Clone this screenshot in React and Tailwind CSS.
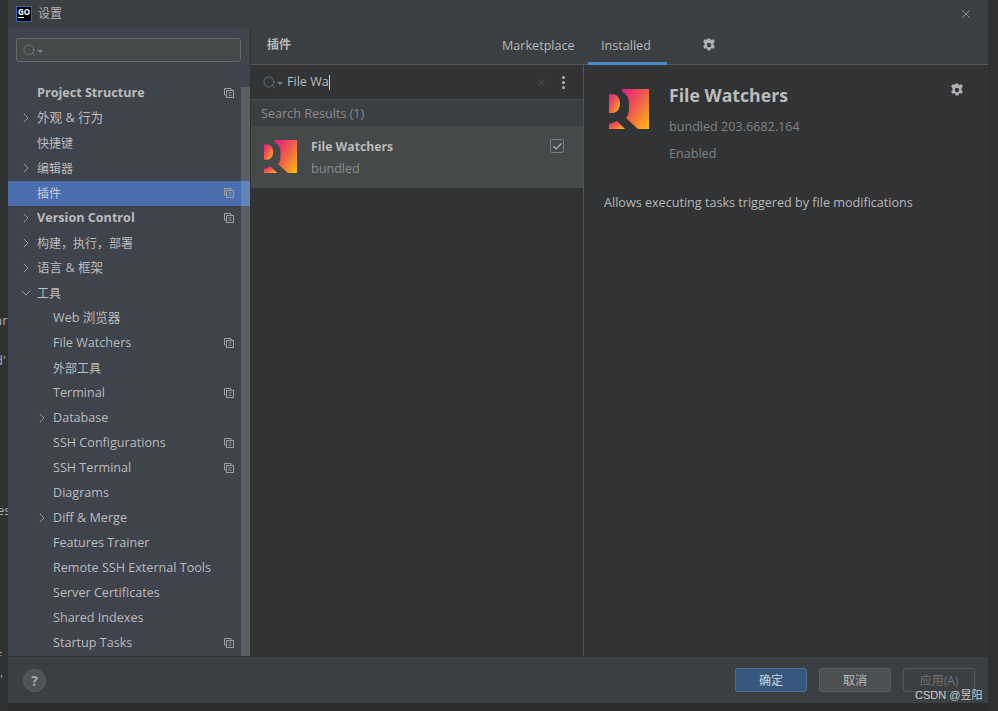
import React from 'react';
import { ChevronRight, ChevronDown, X, Search, Check } from 'lucide-react';

const TREE = [
  { label: 'Project Structure', bold: true, copy: true },
  { label: '外观 & 行为', arrow: 'right' },
  { label: '快捷键', cjk: true },
  { label: '编辑器', arrow: 'right', cjk: true },
  { label: '插件', copy: true, active: true, cjk: true },
  { label: 'Version Control', bold: true, arrow: 'right', copy: true },
  { label: '构建，执行，部署', arrow: 'right', cjk: true },
  { label: '语言 & 框架', arrow: 'right' },
  { label: '工具', arrow: 'down', cjk: true },
  { label: 'Web 浏览器', sub: true },
  { label: 'File Watchers', sub: true, copy: true },
  { label: '外部工具', sub: true, cjk: true },
  { label: 'Terminal', sub: true, copy: true },
  { label: 'Database', sub: true, arrow: 'right' },
  { label: 'SSH Configurations', sub: true, copy: true },
  { label: 'SSH Terminal', sub: true, copy: true },
  { label: 'Diagrams', sub: true },
  { label: 'Diff & Merge', sub: true, arrow: 'right' },
  { label: 'Features Trainer', sub: true },
  { label: 'Remote SSH External Tools', sub: true },
  { label: 'Server Certificates', sub: true },
  { label: 'Shared Indexes', sub: true },
  { label: 'Startup Tasks', sub: true, copy: true },
];

function Gear({ className }) {
  return (
    <svg viewBox="0 0 14 14" className={className} fill="currentColor">
      <path fillRule="evenodd" d="M5.6.6h2.8l.4 1.8 1-.6 1.7-.6 1.4 2.4-1.4 1.3v2.2l1.4 1.3-1.4 2.4-1.7-.6-1 .6-.4 1.8H5.6l-.4-1.8-1-.6-1.7.6L1.1 8.4l1.4-1.3V4.9L1.1 3.6l1.4-2.4 1.7.6 1-.6zM7 4.8a2.2 2.2 0 1 0 0 4.4 2.2 2.2 0 0 0 0-4.4z" />
    </svg>
  );
}

function CopyMark() {
  return (
    <svg viewBox="0 0 10 10" className="w-[10px] h-[10px] mr-[16px] mb-[2px] flex-none text-[#9a9ea2]" fill="none" stroke="currentColor" strokeWidth="1">
      <path d="M7 2.5V.5H.5V7h2" />
      <rect x="2.5" y="2.5" width="7" height="7" />
      <path d="M4.5 4.8h3M4.5 7.2h3" />
    </svg>
  );
}

function PluginLogo({ id, className }) {
  return (
    <svg viewBox="0 0 40 40" className={className}>
      <defs>
        <linearGradient id={id} x1="0" y1="0" x2="1" y2="1">
          <stop offset="0" stopColor="#dd1a86" />
          <stop offset="0.5" stopColor="#f1604a" />
          <stop offset="1" stopColor="#fdc00f" />
        </linearGradient>
      </defs>
      <g fill={`url(#${id})`}>
        <path d="M13 0H40V40H29L17 29C20 27 20 21 20 15C20 9 18 5 13 3Z" />
        <path d="M0 5H3C8 5 11 9 11 14.500C11 20 8 24 3 24H0Z" />
        <path d="M0 40V35L8 32L16 40Z" />
      </g>
    </svg>
  );
}

function SearchIcon() {
  return (
    <span className="flex items-center text-[#7d8184]">
      <Search className="w-[15px] h-[15px]" strokeWidth={1.1} />
      <span className="mt-[2px] w-0 h-0 border-x-[3px] border-x-transparent border-t-[3px] border-t-[#7d8184]" />
    </span>
  );
}

function TreeRow({ item }) {
  const Arrow = item.arrow === 'down' ? ChevronDown : ChevronRight;
  return (
    <div className={`h-[25px] flex items-center ${item.active ? 'bg-[#4b6eaf]' : ''}`}>
      <div className={`flex-none flex justify-end pr-[3px] mb-[2px] ${item.sub ? 'w-[45px]' : 'w-[29px]'}`}>
        {item.arrow && <Arrow className="w-[16px] h-[16px] text-[#a4a7a9]" strokeWidth={1.3} />}
      </div>
      <span className={`flex-1 whitespace-nowrap ${item.cjk ? 'text-[12px]' : 'text-[12.6px]'} ${item.bold ? 'font-bold text-[12.2px]' : ''} ${item.active ? 'text-[#c6ccd6]' : 'text-[#bbbbbb]'}`}>
        {item.label}
      </span>
      {item.copy && <CopyMark />}
    </div>
  );
}

function Button({ children, className }) {
  return (
    <div className={`w-[72px] h-[24px] pt-px rounded-[3px] border flex items-center justify-center text-[12px] ${className}`}>
      {children}
    </div>
  );
}

export default function App() {
  return (
    <div className="relative w-[998px] h-[711px] flex bg-[#2b2c2d] overflow-hidden text-[#bbbbbb]" style={{ fontFamily: '"Open Sans", "Noto Sans CJK SC", sans-serif' }}>
      {/* editor showing behind the dialog */}
      <div className="w-[8px] flex-none overflow-hidden text-[13px] text-[#a9a9a9] leading-[18px] whitespace-nowrap bg-[#2f3032]">
        <div className="h-[311px]" />
        <div className="-ml-[5px]">ar</div>
        <div className="h-[22px]" />
        <div className="-ml-[5px]">d'</div>
        <div className="h-[132px]" />
        <div className="-ml-[3px]">es</div>
        <div className="h-[129px]" />
        <div className="-ml-[3px]">f</div>
        <div className="h-[4px]" />
        <div>'</div>
      </div>

      <div className="w-[980px] h-[703px] flex-none flex flex-col bg-[#3c3f41]">
        {/* title bar */}
        <div className="h-[28px] flex-none flex items-center pl-[8px] pr-[15px]">
          <div className="w-[16px] h-[16px] bg-black border border-[#2d6bb0] flex flex-col items-center text-white text-[8px] font-bold leading-[9px]">
            GO
            <div className="w-[6px] h-px bg-white self-start ml-px mt-px" />
          </div>
          <span className="ml-[6px] text-[12px] text-[#b3b5b6]">设置</span>
          <X className="ml-auto w-[14px] h-[14px] text-[#a9abad]" strokeWidth={1.2} />
        </div>

        <div className="flex-1 flex min-h-0">
          {/* sidebar */}
          <div className="relative w-[242px] flex-none bg-[#3e434c]">
            <div className="mx-[8px] mt-[10px] h-[24px] w-[225px] rounded-[3px] border border-[#646865] bg-[#45494a] flex items-center pl-[5px]">
              <SearchIcon />
            </div>
            <div className="mt-[19px]">
              {TREE.map(item => <TreeRow key={item.label} item={item} />)}
            </div>
            <div className="absolute right-0 top-[59px] bottom-0 w-[9px] bg-white/15" />
          </div>

          <div className="w-px flex-none bg-[#323232]" />

          {/* main */}
          <div className="flex-1 flex flex-col min-w-0">
            <div className="h-[37px] flex-none flex items-stretch border-b border-[#535556]">
              <div className="w-[251px] pl-[16px] pt-[8px] text-[12px] font-bold text-[#b5b7b8]">插件</div>
              <div className="w-[74px] pt-[9px] text-[12.6px] text-[#b5b7b8] whitespace-nowrap">Marketplace</div>
              <div className="w-[79px] ml-[12px] -mb-px pt-[9px] pl-[13px] text-[12.6px] text-[#b5b7b8] border-b-[3px] border-[#4a88c7]">Installed</div>
              <div className="ml-[35px] pt-[10px]">
                <Gear className="w-[14px] h-[14px] text-[#afb1b3]" />
              </div>
            </div>

            <div className="flex-1 flex min-h-0 bg-[#313335]">
              {/* plugin list */}
              <div className="w-[333px] flex-none flex flex-col border-r border-[#515354]">
                <div className="h-[35px] flex-none flex items-center pl-[11px] pr-[18px] border-b border-[#4b4d4e]">
                  <SearchIcon />
                  <span className="ml-[4px] text-[12.6px] text-[#bbbbbb]">File Wa</span>
                  <span className="w-px h-[15px] bg-[#d0d0d0]" />
                  <X className="ml-auto w-[11px] h-[11px] text-[#5d5f61]" strokeWidth={1.5} />
                  <div className="ml-[15px] flex flex-col gap-[2px]">
                    <span className="w-[3px] h-[3px] rounded-full bg-[#afb1b3]" />
                    <span className="w-[3px] h-[3px] rounded-full bg-[#afb1b3]" />
                    <span className="w-[3px] h-[3px] rounded-full bg-[#afb1b3]" />
                  </div>
                </div>
                <div className="h-[26px] flex-none flex items-center pl-[10px] pt-[2px] text-[12.6px] text-[#8a8c8e] bg-[#3c3f41]">Search Results (1)</div>
                <div className="h-[62px] flex-none flex items-start bg-[#45494a] pl-[13px] pr-[19px] pt-[14px]">
                  <PluginLogo id="logo-small" className="w-[33px] h-[33px] flex-none" />
                  <div className="ml-[14px] -mt-[2px] flex-1">
                    <div className="text-[12.2px] font-bold leading-[18px] text-[#bbbbbb]">File Watchers</div>
                    <div className="mt-[4px] text-[12.6px] leading-[18px] text-[#8a8c8e]">bundled</div>
                  </div>
                  <div className="w-[14px] h-[14px] -mt-[1px] rounded-[2px] border border-[#77797b] bg-[#43484a] flex items-center justify-center">
                    <Check className="w-[11px] h-[11px] text-[#b4b6b8]" strokeWidth={2.5} />
                  </div>
                </div>
              </div>

              {/* plugin details */}
              <div className="relative flex-1 min-w-0 pl-[20px]">
                <div className="flex pt-[24px] pl-[5px]">
                  <PluginLogo id="logo-large" className="w-[40px] h-[40px] flex-none" />
                  <div className="ml-[20px] -mt-[7px]">
                    <div className="text-[17.700px] font-bold leading-[26px] text-[#bbbbbb]">File Watchers</div>
                    <div className="mt-[10px] text-[12.6px] leading-[18px] text-[#808284]">bundled 203.6682.164</div>
                    <div className="mt-[9px] text-[12.6px] leading-[18px] text-[#808284]">Enabled</div>
                  </div>
                </div>
                <div className="mt-[31px] text-[12.6px] leading-[18px] text-[#b5b7b8]">Allows executing tasks triggered by file modifications</div>
                <Gear className="absolute right-[24px] top-[18px] w-[14px] h-[14px] text-[#afb1b3]" />
              </div>
            </div>
          </div>
        </div>

        {/* footer */}
        <div className="h-[47px] flex-none flex items-center border-t border-[#323232] pl-[15px] pr-[13px]">
          <div className="w-[23px] h-[23px] rounded-full bg-[#505356] border border-[#5a5d60] flex items-center justify-center text-[14px] font-bold text-[#a9abad]">?</div>
          <div className="ml-auto flex gap-[12px]">
            <Button className="bg-[#365880] border-[#4c708c] text-[#d0d4d8]">确定</Button>
            <Button className="bg-[#4c5052] border-[#5e6060] text-[#bbbbbb]">取消</Button>
            <Button className="border-[#555759] text-[#6f7173]">应用(A)</Button>
          </div>
        </div>
      </div>

      <div className="flex-1 bg-[#2f3032]" />

      {/* watermark */}
      <div className="absolute left-[915px] top-[687px] text-[11px] leading-[16px] text-[#c8c8c8] whitespace-nowrap" style={{ fontFamily: '"Liberation Sans", "Noto Sans CJK SC", sans-serif' }}>CSDN @昱阳</div>
    </div>
  );
}
